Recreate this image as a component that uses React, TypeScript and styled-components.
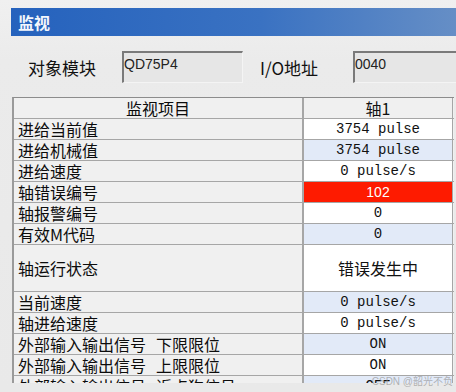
import React from "react";
import styled, { createGlobalStyle } from "styled-components";

const GlobalStyle = createGlobalStyle`
  html, body {
    margin: 0;
    padding: 0;
    background: #ebebeb;
    width: 456px;
    height: 392px;
    overflow: hidden;
  }
`;

const Page = styled.div`
  position: relative;
  width: 456px;
  height: 392px;
  padding: 8px 0 0 11px;
  box-sizing: border-box;
  background: linear-gradient(to bottom, #f0f0f0 0px, #ebebeb 60px, #e9e9e9 100%);
  font-family: "Noto Sans CJK SC", "Noto Sans", sans-serif;
  overflow: hidden;
`;

const TitleBar = styled.div`
  height: 28px;
  line-height: 28px;
  padding-left: 7px;
  margin-right: -11px;
  background: linear-gradient(to right, #2562bd 0%, #3a72c2 55%, #6890c6 100%);
  color: #f4f7fc;
  font-size: 16px;
  font-weight: 700;
`;

const InfoRow = styled.div`
  display: flex;
  align-items: center;
  height: 61px;
  padding: 0 0 0 17px;
  box-sizing: border-box;
`;

const InfoLabel = styled.div<{ $w: number; $ml?: number }>`
  width: ${(p) => p.$w}px;
  margin-left: ${(p) => p.$ml ?? 0}px;
  font-size: 17px;
  color: #111;
  padding-top: 1px;
  flex-shrink: 0;
`;

const InfoBox = styled.div<{ $w: number }>`
  width: ${(p) => p.$w}px;
  height: 32px;
  box-sizing: border-box;
  flex-shrink: 0;
  border-top: 2px solid #7a7a7a;
  border-left: 2px solid #7a7a7a;
  border-right: 1px solid #f4f4f4;
  border-bottom: 1px solid #f4f4f4;
  background: #e6e6e6;
  font-family: "Liberation Sans", "DejaVu Sans", sans-serif;
  font-size: 14px;
  color: #222;
  padding: 3px 0 0 0;
  line-height: 16px;
`;

const Grid = styled.div`
  margin-left: 1px;
  width: 442px;
  height: 286px;
  overflow: hidden;
  border-top: 1px solid #8c8c8c;
  border-left: 2px solid #9a9a9a;
  box-sizing: border-box;
  background: #f0f0f0;
`;

const Row = styled.div<{ $h?: number }>`
  display: grid;
  grid-template-columns: 290px 149px;
  height: ${(p) => p.$h ?? 21}px;
  box-sizing: border-box;
  border-bottom: 1px solid #a6a6a6;
`;

const NameCell = styled.div<{ $center?: boolean }>`
  display: flex;
  align-items: center;
  justify-content: ${(p) => (p.$center ? "center" : "flex-start")};
  padding-left: ${(p) => (p.$center ? 0 : 4)}px;
  border-right: 2px solid #a6a6a6;
  background: #f0f0f0;
  font-size: 16px;
  line-height: 1;
  color: #0c0c0c;
  white-space: nowrap;
`;

const Gap = styled.span`
  display: inline-block;
  width: 10px;
`;

type Tone = "white" | "blue" | "red" | "head";

const toneBg: Record<Tone, string> = {
  white: "#ffffff",
  blue: "#e2eaf8",
  red: "#fe1b00",
  head: "#f0f0f0",
};

const ValueCell = styled.div<{ $tone: Tone; $mono?: boolean }>`
  display: flex;
  align-items: center;
  justify-content: center;
  background: ${(p) => toneBg[p.$tone]};
  color: ${(p) => (p.$tone === "red" ? "#ffffff" : "#111")};
  font-family: ${(p) =>
    p.$mono
      ? '"Liberation Mono", "DejaVu Sans Mono", monospace'
      : p.$tone === "red"
      ? '"Liberation Sans", sans-serif'
      : '"Noto Sans CJK SC", sans-serif'};
  font-size: ${(p) => (p.$mono || p.$tone === "red" ? 14 : 16)}px;
  line-height: 1;
  border-right: 1px solid #a6a6a6;
  white-space: nowrap;
`;

const Watermark = styled.div`
  position: absolute;
  right: 3px;
  top: 373px;
  font-family: "Liberation Sans", "Noto Sans CJK SC", sans-serif;
  font-size: 10px;
  color: rgba(150, 150, 150, 0.7);
`;

type Item = {
  name: string;
  sub?: string;
  value: string;
  tone: Tone;
  mono?: boolean;
  h?: number;
};

const items: Item[] = [
  { name: "进给当前值", value: "3754 pulse", tone: "white", mono: true },
  { name: "进给机械值", value: "3754 pulse", tone: "blue", mono: true },
  { name: "进给速度", value: "0 pulse/s", tone: "white", mono: true },
  { name: "轴错误编号", value: "102", tone: "red" },
  { name: "轴报警编号", value: "0", tone: "white", mono: true },
  { name: "有效M代码", value: "0", tone: "blue", mono: true },
  { name: "轴运行状态", value: "错误发生中", tone: "white", h: 47 },
  { name: "当前速度", value: "0 pulse/s", tone: "blue", mono: true },
  { name: "轴进给速度", value: "0 pulse/s", tone: "white", mono: true },
  { name: "外部输入输出信号", sub: "下限限位", value: "ON", tone: "blue", mono: true },
  { name: "外部输入输出信号", sub: "上限限位", value: "ON", tone: "white", mono: true },
  { name: "外部输入输出信号", sub: "近点狗信号", value: "OFF", tone: "blue", mono: true },
];

export default function App() {
  return (
    <>
      <GlobalStyle />
      <Page>
        <TitleBar>监视</TitleBar>
        <InfoRow>
          <InfoLabel $w={94}>对象模块</InfoLabel>
          <InfoBox $w={121}>QD75P4</InfoBox>
          <InfoLabel $w={93} $ml={17}>I/O地址</InfoLabel>
          <InfoBox $w={110}>0040</InfoBox>
        </InfoRow>
        <Grid>
          <Row>
            <NameCell $center>监视项目</NameCell>
            <ValueCell $tone="head">轴1</ValueCell>
          </Row>
          {items.map((it, i) => (
            <Row key={i} $h={it.h}>
              <NameCell>
                {it.name}
                {it.sub && (
                  <>
                    <Gap />
                    {it.sub}
                  </>
                )}
              </NameCell>
              <ValueCell $tone={it.tone} $mono={it.mono}>
                {it.value}
              </ValueCell>
            </Row>
          ))}
        </Grid>
        <Watermark>CSDN @韶光不负</Watermark>
      </Page>
    </>
  );
}
